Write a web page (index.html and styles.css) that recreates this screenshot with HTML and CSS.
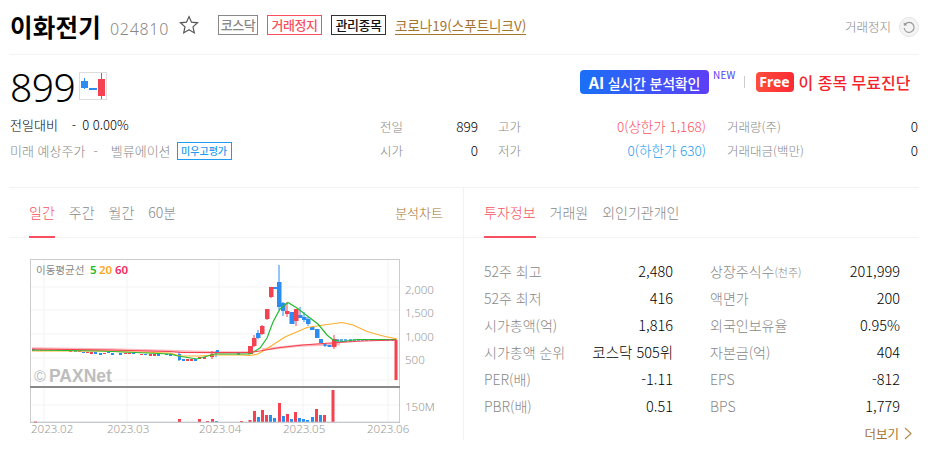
FILE: index.html
```html
<!DOCTYPE html>
<html lang="ko">
<head>
    <meta charset="UTF-8">
    <title>이화전기</title>
    <link rel="stylesheet" href="styles.css">
</head>
<body>
<div class="stock">
    <div class="head">
        <h1 class="name">이화전기</h1>
        <span class="code">024810</span>
        <svg class="star" width="20" height="20" viewBox="0 0 20 20"><path d="M10 1.6l2.5 5.6 6.1.6-4.6 4.1 1.3 6-5.3-3.1-5.3 3.1 1.3-6L1.4 7.8l6.1-.6z"/></svg>
        <span class="tag tag-gray">코스닥</span>
        <span class="tag tag-red">거래정지</span>
        <span class="tag tag-black">관리종목</span>
        <a class="theme" href="#">코로나19(스푸트니크V)</a>
        <span class="status">거래정지</span>
        <span class="refresh">
            <svg width="14" height="14" viewBox="0 0 14 14"><path d="M3.2 4.2A5 5 0 1 1 2.1 8"/><path class="arrow" d="M1.6 2.2l.3 3.6 3.5-.6z"/></svg>
        </span>
    </div>

    <div class="summary">
        <div class="price-row">
            <span class="price">899</span>
            <svg class="candle" width="28" height="28" viewBox="0 0 28 28">
                <rect x=".5" y=".5" width="27" height="27" fill="#fff" stroke="#ddd"/>
                <path d="M5.500 6v11" stroke="#2b8cf2"/>
                <rect x="2" y="9" width="7" height="7" fill="#2b8cf2"/>
                <rect x="10" y="16" width="8" height="2" fill="#2b8cf2"/>
                <path d="M22.500 1v26" stroke="#f44250"/>
                <rect x="19" y="7" width="7" height="17" fill="#f44250"/>
            </svg>
            <a class="ai-btn" href="#"><b>AI</b> 실시간 분석확인</a>
            <span class="new">NEW</span>
            <span class="divider"></span>
            <span class="free">Free</span>
            <a class="diagnose" href="#">이 종목 무료진단</a>
        </div>
        <div class="detail-row">
            <div class="change">
                <div class="change-line"><span>전일대비</span><span class="dash">-</span><span>0 0.00%</span></div>
                <div class="future-line">
                    <span>미래 예상주가</span><span class="dash2">-</span><span>벨류에이션</span>
                    <span class="tag-blue">미우고평가</span>
                </div>
            </div>
            <div class="quote">
                <div class="cell"><span>전일</span><b>899</b></div>
                <div class="cell"><span>고가</span><b class="up">0(상한가 1,168)</b></div>
                <div class="cell"><span>거래량(주)</span><b>0</b></div>
                <div class="cell"><span>시가</span><b>0</b></div>
                <div class="cell"><span>저가</span><b class="down">0(하한가 630)</b></div>
                <div class="cell"><span>거래대금(백만)</span><b>0</b></div>
            </div>
        </div>
    </div>

    <div class="panels">
        <div class="panel-chart">
            <div class="tabs">
                <a class="tab on" href="#">일간</a>
                <a class="tab" href="#">주간</a>
                <a class="tab" href="#">월간</a>
                <a class="tab" href="#">60분</a>
                <a class="tab-link" href="#">분석차트</a>
            </div>
            <svg class="chart" width="420" height="190" viewBox="20 250 420 190">
                <!-- grid -->
                <path class="grid" d="M31 287h368M31 310h368M31 334h368M31 358h368M31 380h368M31 405h368M44 260v162M127 260v162M219 260v162M303 260v162M388 260v162"/>
                <rect class="frame" x="30.500" y="259.500" width="369" height="163"/>
                <path class="split" d="M30 387h370"/>

                <!-- watermark -->
                <text class="mark-c" x="34" y="382">©</text>
                <text class="mark" x="49" y="382">PAXNet</text>

                <!-- moving averages, pale under-line -->
                <path class="ma-pink" d="M32 348.500L110 349.500L170 351L215 352.500L250 352.500M262 349.500L300 345.500L340 344"/>

                <!-- candles -->
                <path class="wick-b" d="M279 265v45M283 302v14M300 307v11M304 312v10M308 317v9M258 330v9M325 343v4M179 352v9M216 351v6"/>
                <path class="wick-r" d="M287 302v15M296 309v17M334 335v14M254 335v12M262 325v10M267 309v11M271 287v11M212 351v8"/>
                <path class="body-b" d="M32 349h3v2h-3zM36 350h3v1h-3zM44 350h3v1h-3zM65 350h3v1h-3zM74 351h3v1h-3zM82 352h3v1h-3zM94 352h3v2h-3zM99 353h3v2h-3zM107 352h3v1h-3zM111 353h3v2h-3zM119 353h3v2h-3zM132 353h3v1h-3zM144 354h3v1h-3zM157 354h3v2h-3zM165 354h3v1h-3zM169 354h3v2h-3zM178 354h3v6h-3zM182 359h3v2h-3zM194 359h3v2h-3zM216 350h3v2h-3zM221 352h3v1h-3zM229 352h3v1h-3zM237 353h3v2h-3zM277 282h4.500v25h-4.500zM256 333h4.500v5h-4.500zM273 287h4.500v2h-4.500zM281 303h4.500v8h-4.500zM289.500 312h5v12h-5zM298 315h4.500v3h-4.500zM302 317h4.500v3h-4.500zM306 319h4.500v5h-4.500zM310 327h4.500v3h-4.500zM315 329h4.500v9h-4.500zM319 339h4v4h-4zM323.500 344h3v2h-3zM327.500 345h4v2h-4z"/>
                <path class="body-b light" d="M336 339h3v3h-3zM340 339h3v3h-3zM344 339h3v3h-3zM349 339h3v3h-3zM353 339h3v2h-3zM357 339h3v2h-3zM361 339h3v2h-3zM365 339h3v2h-3zM370 339h3v2h-3zM374 339h3v2h-3zM378 339h3v2h-3zM382 339h3v2h-3zM386 339h3v2h-3zM391 339h3v2h-3z"/>
                <path class="body-r" d="M40 350h3v1h-3zM49 350h3v1h-3zM57 350h3v1h-3zM69 351h3v1h-3zM78 351h3v1h-3zM86 352h3v1h-3zM90 352h3v2h-3zM103 353h3v1h-3zM124 353h3v1h-3zM128 353h3v1h-3zM140 354h3v1h-3zM149 354h3v2h-3zM153 354h3v2h-3zM186 359h3v2h-3zM190 359h3v2h-3zM198 357h3v2h-3zM203 357h3v2h-3zM210 354h4v3h-4zM248 346h5v8h-5zM252 338h4.500v8h-4.500zM260 326h4.500v8h-4.500zM265 309h4.500v10h-4.500zM269 287h4.500v10h-4.500zM285 311h4.500v3h-4.500zM294 309h4.500v12h-4.500zM332 339h4.500v8h-4.500zM394.500 340h3v40h-3z"/>

                <!-- moving averages -->
                <path class="ma-orange" d="M32 351L100 351L170 353L180 356L200 356L215 355L240 355L250 355.500L258 354L268 348L285 337L307 327.500L327 324.500L342 322.500L353 325L367 331.500L383 336L397 339"/>
                <path class="ma-green" d="M32 350L100 351L170 354L178 356L197 359L215 354L240 354L250 354L260 348L267 338L273 322L280 309L288 302.500L297 308L310 318L318 324L327 335L333 340L343 341.500L357 339.500L396 339.500"/>
                <path class="ma-red" d="M32 349L110 350L170 351.500L182 352.500L230 352.500L250 352.500L263 350.500L280 347.500L303 345L330 343L363 341L397 340"/>

                <!-- volume -->
                <path class="body-r" d="M34 421.500h3v1h-3zM178 419h3v3h-3zM198 419h3v3h-3zM206 421h3v1h-3zM211 419h3v3h-3zM240 421h3v1h-3zM248.500 420h3v2h-3zM253 411h3v11h-3zM261 410h3v12h-3zM265 415h3v7h-3zM278 403h3v19h-3zM286 414h3v8h-3zM294 412h3v10h-3zM315 409h3v13h-3zM323 415h3v7h-3zM331.500 390h3v32h-3z"/>
                <path class="body-b" d="M215 421h3v1h-3zM257 417h3v5h-3zM269 415h3v7h-3zM273 418h3v4h-3zM282 416h3v6h-3zM290 419h3v3h-3zM298 418h3v4h-3zM302 419h3v3h-3zM306 420h3v2h-3zM311 417h3v5h-3zM319 415h3v7h-3z"/>
                <path class="base" d="M31 422h369"/>

                <!-- legend and axes -->
                <text class="legend" x="36" y="274">이동평균선</text>
                <text class="legend-n green" x="90" y="274">5</text>
                <text class="legend-n orange" x="99" y="274">20</text>
                <text class="legend-n pink" x="115" y="274">60</text>
                <text class="axis" x="405" y="294">2,000</text>
                <text class="axis" x="405" y="317">1,500</text>
                <text class="axis" x="405" y="341">1,000</text>
                <text class="axis" x="405" y="364">500</text>
                <text class="axis" x="405" y="411">150M</text>
                <text class="axis" x="31" y="433">2023.02</text>
                <text class="axis" x="107" y="433">2023.03</text>
                <text class="axis" x="199" y="433">2023.04</text>
                <text class="axis" x="283" y="433">2023.05</text>
                <text class="axis" x="367" y="433">2023.06</text>
            </svg>
        </div>

        <div class="panel-info">
            <div class="tabs">
                <a class="tab on" href="#">투자정보</a>
                <a class="tab" href="#">거래원</a>
                <a class="tab" href="#">외인기관개인</a>
            </div>
            <div class="info">
                <div class="row"><span>52주 최고</span><b>2,480</b></div>
                <div class="row"><span>상장주식수<small>(천주)</small></span><b>201,999</b></div>
                <div class="row"><span>52주 최저</span><b>416</b></div>
                <div class="row"><span>액면가</span><b>200</b></div>
                <div class="row"><span>시가총액(억)</span><b>1,816</b></div>
                <div class="row"><span>외국인보유율</span><b>0.95%</b></div>
                <div class="row"><span>시가총액 순위</span><b>코스닥 505위</b></div>
                <div class="row"><span>자본금(억)</span><b>404</b></div>
                <div class="row"><span>PER(배)</span><b>-1.11</b></div>
                <div class="row"><span>EPS</span><b>-812</b></div>
                <div class="row"><span>PBR(배)</span><b>0.51</b></div>
                <div class="row"><span>BPS</span><b>1,779</b></div>
            </div>
            <a class="more" href="#">더보기
                <svg width="8" height="13" viewBox="0 0 8 13"><path d="M1 1l6 5.500-6 5.500"/></svg>
            </a>
        </div>
    </div>
</div>
</body>
</html>
```

FILE: styles.css
```css
* {
    box-sizing: border-box;
}
html, body {
    margin: 0;
    padding: 0;
    background: #fff;
    overflow: hidden;
}
body {
    font-family: "Noto Sans CJK KR", "Noto Sans", sans-serif;
    font-size: 13px;
    font-weight: 300;
    color: #000;
}
a {
    text-decoration: none;
}
b {
    font-weight: 300;
}
.stock {
    width: 910px;
    margin-left: 9px;
    height: 462px;
}

/* head */
.head {
    height: 55px;
    display: flex;
    align-items: center;
    border-bottom: 1px solid #f2f2f2;
    padding-left: 1px;
    padding-bottom: 1px;
}
.name {
    margin: 0;
    font-size: 24.500px;
    line-height: 30px;
    font-weight: 700;
    letter-spacing: .2px;
}
.code {
    margin-left: 9px;
    margin-top: 4px;
    font-size: 16px;
    font-weight: 300;
    letter-spacing: .7px;
    color: #888;
    font-family: "Noto Sans", sans-serif;
}
.star {
    margin-left: 10px;
    margin-top: -3px;
}
.star path {
    fill: none;
    stroke: #555;
    stroke-width: 1.2;
}
.tag {
    height: 20px;
    line-height: 17px;
    font-size: 13px;
    font-weight: 500;
    letter-spacing: -.5px;
    text-align: center;
    border: 1px solid;
    margin-top: -3px;
}
.tag-gray {
    width: 40px;
    margin-left: 19px;
    color: #888;
    border-color: #888;
}
.tag-red {
    width: 55px;
    margin-left: 9px;
    color: #f9505f;
    border-color: #f9505f;
}
.tag-black {
    width: 55px;
    margin-left: 9px;
    color: #111;
    border-color: #333;
}
.theme {
    margin-left: 9px;
    margin-top: -3px;
    font-size: 13.500px;
    font-weight: 400;
    line-height: 18px;
    color: #a5742f;
    border-bottom: 1px solid #a5742f;
}
.status {
    margin-left: auto;
    color: #888;
    font-size: 12.500px;
}
.refresh {
    width: 20px;
    height: 20px;
    margin-left: 8px;
    border-radius: 50%;
    background: #f4f4f4;
    border: 1px solid #e4e4e4;
    display: flex;
    align-items: center;
    justify-content: center;
}
.refresh path {
    fill: none;
    stroke: #999;
    stroke-width: 1.2;
}
.refresh path.arrow {
    fill: #999;
    stroke: none;
}

/* summary */
.summary {
    height: 133px;
    border-bottom: 1px solid #f2f2f2;
    padding-top: 15px;
}
.price-row {
    height: 34px;
    display: flex;
    align-items: center;
}
.price {
    width: 70px;
    padding-left: 1px;
    font-family: "Noto Sans", sans-serif;
    font-weight: 300;
    font-size: 39px;
    line-height: 34px;
    letter-spacing: -.5px;
}
.candle {
    margin-top: -2px;
}
.ai-btn {
    width: 129px;
    height: 24px;
    margin-left: 473px;
    margin-top: -10px;
    line-height: 24px;
    border-radius: 4px;
    text-align: center;
    color: #fff;
    font-size: 14px;
    font-weight: 500;
    letter-spacing: -.2px;
    white-space: nowrap;
    background: linear-gradient(90deg, #1a70f6, #5c3ff6);
}
.ai-btn b {
    font-weight: 700;
    font-size: 16px;
}
.new {
    margin-left: 4px;
    margin-top: -24px;
    font-size: 10px;
    line-height: 10px;
    font-weight: 400;
    letter-spacing: .2px;
    color: #5a3ff0;
}
.divider {
    width: 1px;
    height: 12px;
    margin-left: 8px;
    margin-top: -10px;
    background: #ccc;
}
.free {
    width: 38px;
    height: 20px;
    margin-left: 11px;
    margin-top: -10px;
    line-height: 20px;
    border-radius: 4px;
    text-align: center;
    color: #fff;
    font-family: "Noto Sans", sans-serif;
    font-size: 14px;
    font-weight: 700;
    background: linear-gradient(90deg, #ff4d3c, #fb2a33);
}
.diagnose {
    margin-left: 5px;
    margin-top: -10px;
    font-size: 16px;
    font-weight: 500;
    color: #f5222d;
    white-space: nowrap;
}
.detail-row {
    display: flex;
    margin-top: 10px;
}
.change {
    width: 371px;
}
.change-line {
    display: flex;
    height: 24px;
    padding: 0 0 4px 1px;
    align-items: center;
    font-size: 13px;
}
.dash {
    margin: 0 6px 0 14px;
}
.future-line {
    display: flex;
    height: 24px;
    padding-left: 1px;
    align-items: center;
    color: #888;
    font-size: 13px;
}
.dash2 {
    margin: 0 13px 0 8px;
}
.tag-blue {
    width: 55px;
    height: 18px;
    line-height: 15px;
    margin: 2px 0 0 6px;
    font-size: 10px;
    font-weight: 500;
    text-align: center;
    color: #1e9bf0;
    border: 1px solid #1e9bf0;
}
.quote {
    display: grid;
    grid-template-columns: 98px 208px 192px;
    column-gap: 20px;
    grid-auto-rows: 24px;
    font-size: 12.500px;
}
.cell {
    display: flex;
    justify-content: space-between;
    align-items: center;
    color: #888;
}
.cell:nth-child(3n) {
    margin-left: 1px;
}
.cell b {
    color: #000;
    font-size: 13.500px;
}
.cell .up {
    color: #f9505f;
    font-size: 13.500px;
}
.cell .down {
    color: #1e9bf0;
    font-size: 13.500px;
}

/* panels */
.panels {
    display: flex;
}
.panel-chart {
    width: 455px;
    border-right: 1px solid #f2f2f2;
    height: 252px;
}
.panel-info {
    flex: 1;
    position: relative;
}
.tabs {
    height: 50px;
    display: flex;
    gap: 14px;
    border-bottom: 1px solid #f4f4f4;
    padding-left: 20px;
}
.tab {
    height: 50px;
    line-height: 49px;
    font-size: 14px;
    color: #888;
    margin-bottom: -1px;
}
.tab.on {
    color: #f9505f;
    border-bottom: 2px solid #f9505f;
}
.tab-link {
    margin-left: auto;
    margin-right: 20px;
    line-height: 49px;
    font-size: 13px;
    color: #a5742f;
}
.chart {
    display: block;
    margin: 12px 0 0 11px;
}
.grid {
    fill: none;
    stroke: #f3f3f3;
}
.frame {
    fill: none;
    stroke: #ccc;
}
.split {
    fill: none;
    stroke: #888;
    stroke-width: 2;
}
.base {
    stroke: #b7c4d4;
    opacity: .6;
}
.mark {
    font-family: "Liberation Sans", sans-serif;
    font-weight: 700;
    font-size: 17.500px;
    fill: #bdbdbd;
}
.mark-c {
    font-family: "Liberation Sans", sans-serif;
    font-size: 16px;
    fill: #bdbdbd;
}
.wick-b {
    stroke: #2b8cf2;
    fill: none;
}
.wick-r {
    stroke: #f44250;
    fill: none;
}
.body-b {
    fill: #2b8cf2;
}
.body-b.light {
    fill: #62aef5;
}
.body-r {
    fill: #f44250;
}
.ma-pink {
    fill: none;
    stroke: #fbb9c0;
    stroke-width: 2.500;
}
.ma-orange {
    fill: none;
    stroke: #ffb02e;
    stroke-width: 1.2;
}
.ma-green {
    fill: none;
    stroke: #22bb33;
    stroke-width: 1.2;
}
.ma-red {
    fill: none;
    stroke: #f44250;
    stroke-width: 1;
}
.legend {
    font-size: 10.500px;
    font-weight: 400;
    fill: #888;
}
.legend-n {
    font-family: "Noto Sans", sans-serif;
    font-size: 11.500px;
    font-weight: 600;
}
.green {
    fill: #22bb22;
}
.orange {
    fill: #ffa51f;
}
.pink {
    fill: #f5275f;
}
.axis {
    font-family: "Noto Sans", sans-serif;
    font-size: 11.500px;
    font-weight: 300;
    fill: #999;
}

/* investment info */
.info {
    display: grid;
    grid-template-columns: 189px 190px;
    column-gap: 37px;
    grid-auto-rows: 27px;
    padding: 19px 0 0 20px;
    font-size: 14px;
}
.row {
    display: flex;
    justify-content: space-between;
    align-items: center;
    color: #888;
}
.row small {
    font-size: 11px;
}
.row b {
    color: #000;
    font-size: 14.500px;
}
.more {
    position: absolute;
    right: 7px;
    top: 236px;
    display: flex;
    align-items: center;
    gap: 5px;
    font-size: 12.500px;
    font-weight: 400;
    color: #a5742f;
}
.more path {
    fill: none;
    stroke: #b98d55;
    stroke-width: 1.2;
}
```
